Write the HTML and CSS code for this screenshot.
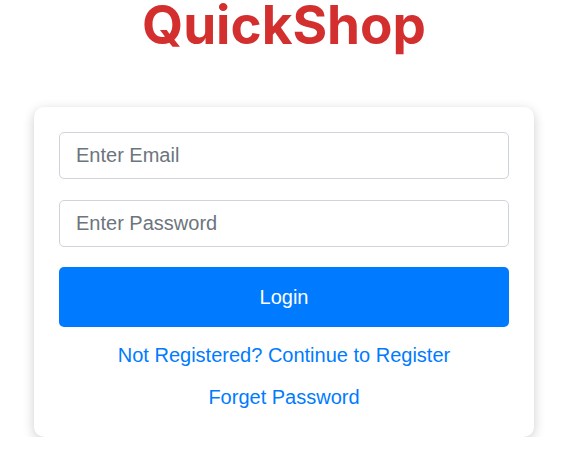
FILE: index.html
```html
<!DOCTYPE html>
<html>
<head>
<meta charset="utf-8">
<link rel="stylesheet" href="styles.css">
</head>
<body>
<div class="page">
  <h1 class="brand">QuickShop</h1>
  <div class="card">
    <form class="form">
      <input class="field" type="email" placeholder="Enter Email">
      <input class="field" type="password" placeholder="Enter Password">
      <button class="btn" type="button">Login</button>
    </form>
    <div class="links">
      <a class="link" href="#">Not Registered? Continue to Register</a>
      <a class="link" href="#">Forget Password</a>
    </div>
  </div>
</div>
</body>
</html>
```

FILE: styles.css
```css
html, body {
  margin: 0;
  padding: 0;
  background: #fff;
}
body {
  font-family: "Liberation Sans", Arial, sans-serif;
}
.page {
  width: 568px;
  display: flex;
  flex-direction: column;
  align-items: center;
}
.brand {
  margin: 0;
  height: 107px;
  box-sizing: border-box;
  padding-top: 0;
  font-family: Inter, "Open Sans", sans-serif;
  font-weight: 700;
  font-size: 53px;
  line-height: 50px;
  color: #d32f2f;
  letter-spacing: 0;
}
.card {
  width: 500px;
  box-sizing: border-box;
  padding: 25px 25px 28px;
  background: #fff;
  border-radius: 10px;
  box-shadow: 0 3px 12px rgba(0, 0, 0, 0.2);
}
.form {
  display: flex;
  flex-direction: column;
  gap: 21px;
  margin: 0;
}
.field {
  height: 47px;
  box-sizing: border-box;
  border: 1px solid #ced4da;
  border-radius: 5px;
  padding: 0 16px;
  font-family: "Liberation Sans", Arial, sans-serif;
  font-size: 20px;
  color: #495057;
  outline: none;
}
.field::placeholder {
  color: #6c757d;
}
.btn {
  margin-top: -1px;
  height: 60px;
  border: none;
  border-radius: 5px;
  background: #007bff;
  color: #fff;
  font-family: "Liberation Sans", Arial, sans-serif;
  font-size: 20px;
}
.links {
  display: flex;
  flex-direction: column;
  align-items: center;
  gap: 18px;
  margin-top: 16px;
}
.link {
  color: #007bff;
  text-decoration: none;
  font-size: 20px;
  line-height: 24px;
}
```
